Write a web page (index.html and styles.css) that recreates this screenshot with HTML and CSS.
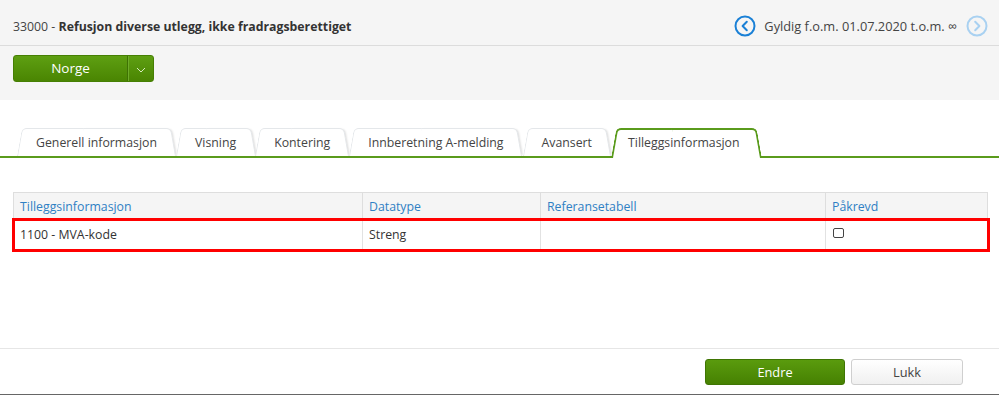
FILE: index.html
```html
<!DOCTYPE html>
<html lang="no">
<head>
    <meta charset="UTF-8">
    <meta name="viewport" content="width=device-width, initial-scale=1.0">
    <title>Lønnsart</title>
    <link rel="stylesheet" href="styles.css">
</head>
<body>
    <div class="head">
        <div class="topbar">
            <div class="title">33000 - <b>Refusjon diverse utlegg, ikke fradragsberettiget</b></div>
            <div class="period">
                <svg class="nav" width="22" height="22" viewBox="0 0 22 22">
                    <circle cx="11" cy="11" r="9.5" fill="none" stroke="#1a80d6" stroke-width="2"/>
                    <path d="M12.8 6.8 L8.6 11 L12.8 15.2" fill="none" stroke="#1a80d6" stroke-width="2" stroke-linecap="round" stroke-linejoin="round"/>
                </svg>
                <span>Gyldig f.o.m. 01.07.2020 t.o.m. ∞</span>
                <svg class="nav" width="22" height="22" viewBox="0 0 22 22">
                    <circle cx="11" cy="11" r="9.5" fill="none" stroke="#a9d1f1" stroke-width="2"/>
                    <path d="M9.2 6.8 L13.4 11 L9.2 15.2" fill="none" stroke="#a9d1f1" stroke-width="2" stroke-linecap="round" stroke-linejoin="round"/>
                </svg>
            </div>
        </div>
        <div class="toolbar">
            <div class="split-btn">
                <span class="split-main">Norge</span>
                <span class="split-arrow">
                    <svg width="10" height="6" viewBox="0 0 10 6"><path d="M1 1 L5 5 L9 1" fill="none" stroke="#d6ecbf" stroke-width="1"/></svg>
                </span>
            </div>
        </div>
    </div>

    <div class="tabs-wrap">
        <div class="tabs">
            <div class="tab">Generell informasjon</div>
            <div class="tab">Visning</div>
            <div class="tab">Kontering</div>
            <div class="tab">Innberetning A-melding</div>
            <div class="tab">Avansert</div>
            <div class="tab active">Tilleggsinformasjon</div>
        </div>
    </div>

    <div class="content">
        <table class="grid">
            <thead>
                <tr>
                    <th class="c1">Tilleggsinformasjon</th>
                    <th class="c2">Datatype</th>
                    <th class="c3">Referansetabell</th>
                    <th class="c4">Påkrevd</th>
                </tr>
            </thead>
            <tbody>
                <tr class="marked">
                    <td>1100 - MVA-kode</td>
                    <td>Streng</td>
                    <td></td>
                    <td><input type="checkbox" class="check"></td>
                </tr>
            </tbody>
        </table>
    </div>

    <div class="footer">
        <button class="btn btn-green">Endre</button>
        <button class="btn btn-white">Lukk</button>
    </div>
</body>
</html>
```

FILE: styles.css
```css
* {
    margin: 0;
    padding: 0;
    box-sizing: border-box;
}
body {
    font-family: "Open Sans", "Liberation Sans", sans-serif;
    font-size: 12.3px;
    color: #333;
    background: #fff;
}

.head {
    background: #f5f5f5;
}
.topbar {
    height: 46px;
    padding: 0 11px 0 13px;
    display: flex;
    align-items: center;
    justify-content: space-between;
    border-bottom: 1px solid #dcdcdc;
}
.title {
    color: #444;
    padding-top: 8px;
}
.title b {
    font-weight: 700;
    color: #333;
}
.period {
    display: flex;
    align-items: center;
    gap: 8px;
    color: #444;
    font-size: 12.8px;
    padding-top: 6px;
}
.period span {
    margin-right: 1px;
}
.nav {
    display: block;
}

.toolbar {
    padding: 9px 13px 18px;
}
.split-btn {
    display: flex;
    width: 141px;
    height: 27px;
    border-radius: 3px;
    background: linear-gradient(#5e9f12, #4a8502);
    border: 1px solid #467f03;
    color: #fff;
}
.split-main {
    width: 114px;
    text-align: center;
    line-height: 25px;
    font-size: 13.5px;
    border-right: 1px solid #3f7204;
    box-shadow: 1px 0 0 #6eac2a;
}
.split-arrow {
    flex: 1;
    display: flex;
    align-items: center;
    justify-content: center;
    padding-top: 2px;
}

.tabs-wrap {
    padding: 28px 0 0;
    border-bottom: 2px solid #5a9b1c;
}
.tabs {
    display: flex;
    padding-left: 17px;
}
.tab {
    position: relative;
    z-index: 1;
    height: 28px;
    line-height: 29px;
    padding: 0 19px;
    color: #444;
    white-space: nowrap;
}
.tab::before,
.tab::after {
    content: '';
    position: absolute;
    top: 0;
    bottom: 0;
    width: 55%;
    background: #fff;
    border: 1px solid #e4e7ea;
    border-bottom: none;
    z-index: -1;
}
.tab::before {
    left: 0;
    border-right: none;
    border-radius: 5px 0 0 0;
    transform: skewX(-10deg);
    transform-origin: bottom left;
}
.tab::after {
    right: 0;
    border-left: none;
    border-radius: 0 5px 0 0;
    transform: skewX(10deg);
    transform-origin: bottom right;
    box-shadow: 2px 0 2px -1px rgba(0, 0, 0, 0.12);
}
.tab.active {
    height: 30px;
    margin-bottom: -2px;
    padding: 0 22px 0 17px;
    z-index: 2;
}
.tab.active::before,
.tab.active::after {
    border: 2px solid #5a9b1c;
    border-bottom: none;
    box-shadow: none;
}
.tab.active::before {
    border-right: none;
}
.tab.active::after {
    border-left: none;
}

.content {
    height: 190px;
    padding: 34px 11px 0 13px;
}
.grid {
    width: 975px;
    border-collapse: collapse;
}
.grid th {
    height: 27px;
    background: #f5f5f5;
    border: 1px solid #dedede;
    color: #2f80c4;
    font-weight: 400;
    text-align: left;
    padding: 1px 6px 0;
}
.grid td {
    height: 30px;
    border: 1px solid #e2e2e2;
    padding: 0 6px;
    color: #333;
}
.grid .c1 { width: 349px; }
.grid .c2 { width: 178px; }
.grid .c3 { width: 285px; }
.marked {
    outline: 3px solid #f00;
    outline-offset: -1px;
}
.check {
    appearance: none;
    display: block;
    width: 11px;
    height: 10px;
    margin: -3px 0 0 1px;
    border: 1px solid #444;
    border-radius: 2px;
    background: #fff;
}

.footer {
    display: flex;
    justify-content: flex-end;
    gap: 6px;
    padding: 10px 36px 9px;
    border-top: 1px solid #e6e6e6;
    border-bottom: 1px solid #666;
}
.btn {
    height: 26px;
    border-radius: 3px;
    font-family: "Open Sans", "Liberation Sans", sans-serif;
    font-size: 12.8px;
}
.btn-green {
    width: 140px;
    color: #fff;
    background: linear-gradient(#5a9b0e, #468102);
    border: 1px solid #3f7503;
}
.btn-white {
    width: 112px;
    color: #444;
    background: linear-gradient(#fff, #f0f0f0);
    border: 1px solid #cfcfcf;
}
```
